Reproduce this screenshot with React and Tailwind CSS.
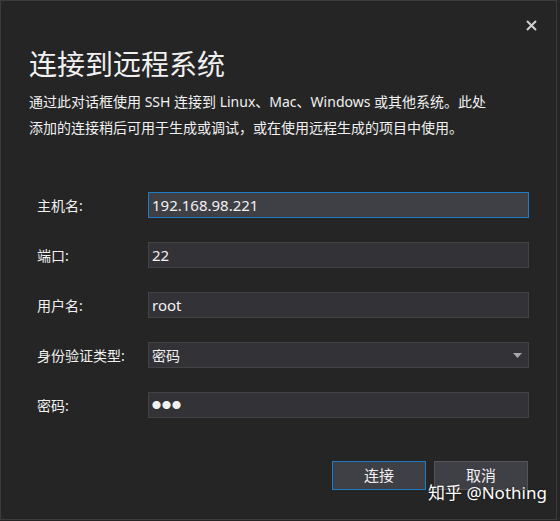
import React from 'react';

const fontStack = { fontFamily: '"Noto Sans", "Noto Sans CJK SC", sans-serif' };

const Field = ({ label, children, focused, select }) => (
    <div className="flex items-center h-[50px]">
        <div className="w-[111px] text-[14px] text-[#f1f1f1]">{label}</div>
        <div
            className={`relative flex items-center w-[381px] h-[26px] px-[3px] text-[15px] text-[#f1f1f1] border ${
                focused ? 'bg-[#3f3f46] border-[#1e7bc4]' : 'bg-[#333337] border-[#434346]'
            }`}
        >
            {children}
            {select && (
                <svg className="absolute right-[6px] top-[10px]" width="9" height="5" viewBox="0 0 9 5">
                    <path d="M0 0 H9 L4.5 5 Z" fill="#a8a8a8" />
                </svg>
            )}
        </div>
    </div>
);

export default function App() {
    return (
        <div className="w-[560px] h-[521px] bg-[#252526]" style={fontStack}>
            <div className="relative w-[557px] h-[520px] border border-[#3c3c3f] bg-[#252526]">
                {/* Close */}
                <div className="flex justify-end pt-[19px] pr-[19px]">
                    <svg width="11" height="11" viewBox="0 0 11 11">
                        <path d="M1 1 L10 10 M10 1 L1 10" stroke="#d0d0d0" strokeWidth="2" />
                    </svg>
                </div>

                {/* Header */}
                <div className="pl-[28px]">
                    <h1 className="mt-[14px] text-[28px] leading-[38px] text-[#f1f1f1]">连接到远程系统</h1>
                    <p className="mt-[6px] text-[14px] leading-[26px] text-[#f1f1f1] whitespace-nowrap">
                        通过此对话框使用 SSH 连接到 Linux、Mac、Windows 或其他系统。此处
                        <br />
                        添加的连接稍后可用于生成或调试，或在使用远程生成的项目中使用。
                    </p>
                </div>

                {/* Form */}
                <div className="pl-[36px] mt-[39px]">
                    <Field label="主机名:" focused>192.168.98.221</Field>
                    <Field label="端口:">22</Field>
                    <Field label="用户名:">root</Field>
                    <Field label="身份验证类型:" select>
                        <span className="text-[14px]">密码</span>
                    </Field>
                    <Field label="密码:">
                        <span className="text-[9px] tracking-[1px] text-[#f1f1f1]">●●●</span>
                    </Field>
                </div>

                {/* Buttons */}
                <div className="flex justify-end gap-[8px] pr-[28px] mt-[31px]">
                    <button className="w-[94px] h-[29px] bg-[#3f3f46] border border-[#1e7bc4] text-[15px] text-[#f1f1f1]">
                        连接
                    </button>
                    <button className="w-[94px] h-[29px] bg-[#3f3f46] border border-[#555558] text-[15px] text-[#f1f1f1]">
                        取消
                    </button>
                </div>

                {/* Watermark */}
                <div className="absolute left-[427px] top-[479px] text-[17px] text-white [text-shadow:0_0_2px_rgba(0,0,0,0.6)]">
                    知乎 @Nothing
                </div>
            </div>
        </div>
    );
}
